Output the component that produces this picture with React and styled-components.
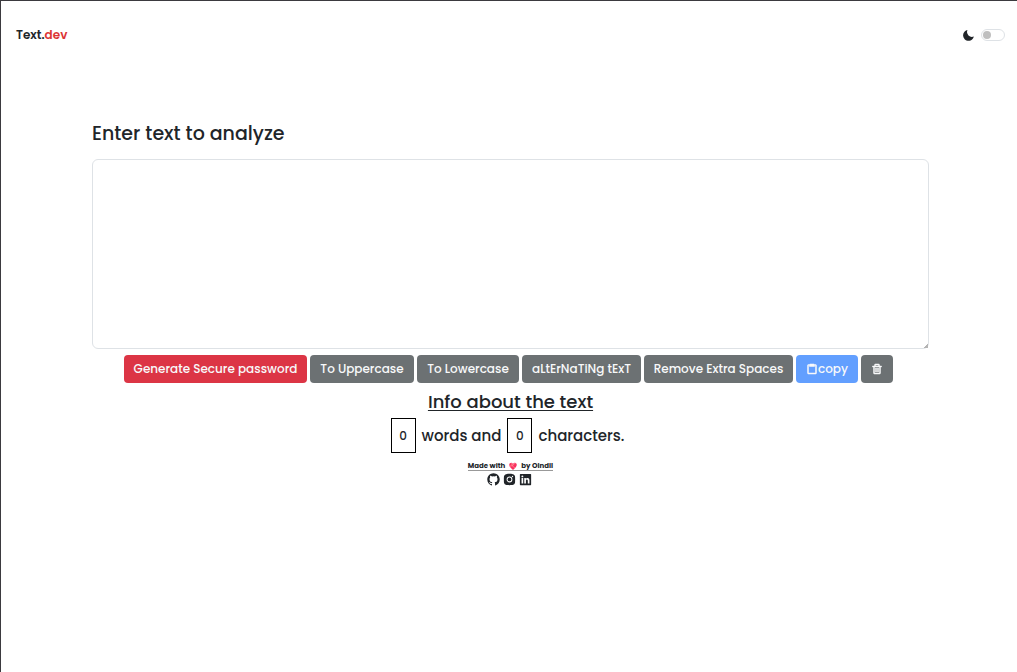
import React, { useState } from "react";
import styled, { createGlobalStyle } from "styled-components";
import { BiClipboard, BiTrash, BiSolidMoon, BiLogoGithub, BiLogoInstagramAlt, BiLogoLinkedinSquare } from "react-icons/bi";

const GlobalStyle = createGlobalStyle`
  *, *::before, *::after { box-sizing: border-box; }
  body {
    margin: 0;
    background: #fff;
    color: #212529;
    font-family: Poppins, Inter, "Open Sans", sans-serif;
    font-weight: 500;
  }
`;

const Page = styled.div`
  min-height: 100vh;
  border-top: 1px solid #3b3a3f;
  border-left: 1px solid #3b3a3f;
`;

const Navbar = styled.header`
  display: flex;
  justify-content: space-between;
  align-items: center;
  height: 68px;
  padding: 0 12px 0 15px;
`;

const Brand = styled.a`
  color: #212529;
  font-size: 12px;
  font-weight: 600;
  line-height: 20px;
  text-decoration: none;
`;

const Accent = styled.span`
  color: #dc3535;
`;

const ThemeLabel = styled.label`
  display: flex;
  align-items: center;
  gap: 6px;
  font-size: 13px;
`;

const Switch = styled.input`
  appearance: none;
  display: flex;
  align-items: center;
  width: 24px;
  height: 12px;
  margin: 0;
  padding: 0 1px;
  border: 1px solid #dee2e6;
  border-radius: 6px;
  background: #fff;
  &::before {
    content: "";
    width: 8px;
    height: 8px;
    border-radius: 50%;
    background: #bfbfbf;
  }
  &:checked { justify-content: flex-end; }
`;

const Main = styled.main`
  display: flex;
  flex-direction: column;
  padding: 53px 88px 0 91px;
`;

const Title = styled.label`
  margin-bottom: 13px;
  font-size: 19px;
  line-height: 24px;
`;

const TextBox = styled.textarea`
  width: 100%;
  height: 190px;
  padding: 6px 12px;
  border: 1px solid #dee2e6;
  border-radius: 6px;
  color: inherit;
  font: inherit;
  resize: vertical;
  &::-webkit-resizer {
    background: linear-gradient(135deg, transparent 86%, #b4b4b4 86%);
  }
`;

const Actions = styled.div`
  display: flex;
  flex-wrap: wrap;
  justify-content: center;
  gap: 3px;
  margin: 6px 4px 0 0;
`;

const colors = { danger: "#dc3545", secondary: "#6c7173", primary: "#629fff" };

const Button = styled.button`
  display: flex;
  align-items: center;
  justify-content: center;
  height: 28px;
  min-width: ${({ $width }) => $width}px;
  padding: 0 8px;
  border: 0;
  border-radius: 4px;
  background: ${({ $tone }) => colors[$tone]};
  color: #f8f9fa;
  font-family: inherit;
  font-size: 12px;
  font-weight: 500;
  line-height: 20px;
  white-space: nowrap;
  svg {
    stroke: currentColor;
    stroke-width: 1px;
  }
`;

const Info = styled.section`
  display: flex;
  flex-direction: column;
  align-items: center;
`;

const InfoTitle = styled.h2`
  margin: 7px 0 4px;
  font-size: 18px;
  font-weight: 500;
  line-height: 24px;
  text-decoration: underline;
  text-decoration-thickness: 1px;
  text-underline-offset: 2px;
`;

const Counts = styled.p`
  display: flex;
  align-items: center;
  gap: 6px;
  margin: 0 6px 0 0;
  font-size: 15px;
  line-height: 24px;
`;

const Count = styled.span`
  min-width: 25px;
  padding: 5px 7px 4px;
  border: 1px solid #000;
  font-size: 12px;
  text-align: center;
`;

const Footer = styled.footer`
  display: flex;
  flex-direction: column;
  align-items: center;
  margin-top: 9px;
`;

const Credit = styled.a`
  display: flex;
  align-items: center;
  gap: 3px;
  border-bottom: 1px solid #999;
  color: #212529;
  font-size: 7px;
  font-weight: 700;
  line-height: 8px;
  text-decoration: none;
`;

const Socials = styled.nav`
  display: flex;
  gap: 1px;
  margin: 1px 2px 0 0;
`;

const SocialLink = styled.a`
  display: flex;
  color: #212529;
  font-size: 15px;
`;

const Heart = () => (
  <svg width="10" height="8" viewBox="0 0 18 17" role="img" aria-label="heart">
    <path d="M9 17C4 13 1 10 1 6c0-5 6-6 8-2 2-4 8-3 8 2 0 4-3 7-8 11z" fill="#f92f60" />
    <path d="M2 9c5-1 9-3 12-7M6 3c1 5 4 8 7 10" fill="none" stroke="#ff8a8f" strokeWidth="2" />
  </svg>
);

export default function App() {
  const [text, setText] = useState("");
  const words = text.split(/\s+/).filter(Boolean).length;
  const alternate = () =>
    setText([...text].map((c, i) => (i % 2 ? c.toUpperCase() : c.toLowerCase())).join(""));
  const generate = () =>
    setText(Array.from(crypto.getRandomValues(new Uint8Array(16)), (n) => String.fromCharCode(33 + (n % 94))).join(""));

  return (
    <Page>
      <GlobalStyle />
      <Navbar>
        <Brand href="#">Text.<Accent>dev</Accent></Brand>
        <ThemeLabel>
          <BiSolidMoon />
          <Switch type="checkbox" role="switch" aria-label="Dark mode" />
        </ThemeLabel>
      </Navbar>
      <Main>
        <Title htmlFor="text">Enter text to analyze</Title>
        <TextBox id="text" value={text} onChange={(e) => setText(e.target.value)} />
        <Actions>
          <Button $tone="danger" $width={183} onClick={generate}>Generate Secure password</Button>
          <Button $tone="secondary" $width={104} onClick={() => setText(text.toUpperCase())}>To Uppercase</Button>
          <Button $tone="secondary" $width={102} onClick={() => setText(text.toLowerCase())}>To Lowercase</Button>
          <Button $tone="secondary" $width={119} onClick={alternate}>aLtErNaTiNg tExT</Button>
          <Button $tone="secondary" $width={149} onClick={() => setText(text.split(/\s+/).join(" "))}>Remove Extra Spaces</Button>
          <Button $tone="primary" $width={62} onClick={() => navigator.clipboard?.writeText(text)}><BiClipboard />copy</Button>
          <Button $tone="secondary" $width={32} aria-label="Clear" onClick={() => setText("")}><BiTrash /></Button>
        </Actions>
        <Info>
          <InfoTitle>Info about the text</InfoTitle>
          <Counts>
            <Count>{words}</Count> words and <Count>{text.length}</Count> characters.
          </Counts>
        </Info>
        <Footer>
          <Credit href="#">Made with <Heart /> by Oindil</Credit>
          <Socials>
            <SocialLink href="#" aria-label="GitHub"><BiLogoGithub /></SocialLink>
            <SocialLink href="#" aria-label="Instagram"><BiLogoInstagramAlt /></SocialLink>
            <SocialLink href="#" aria-label="LinkedIn"><BiLogoLinkedinSquare /></SocialLink>
          </Socials>
        </Footer>
      </Main>
    </Page>
  );
}
